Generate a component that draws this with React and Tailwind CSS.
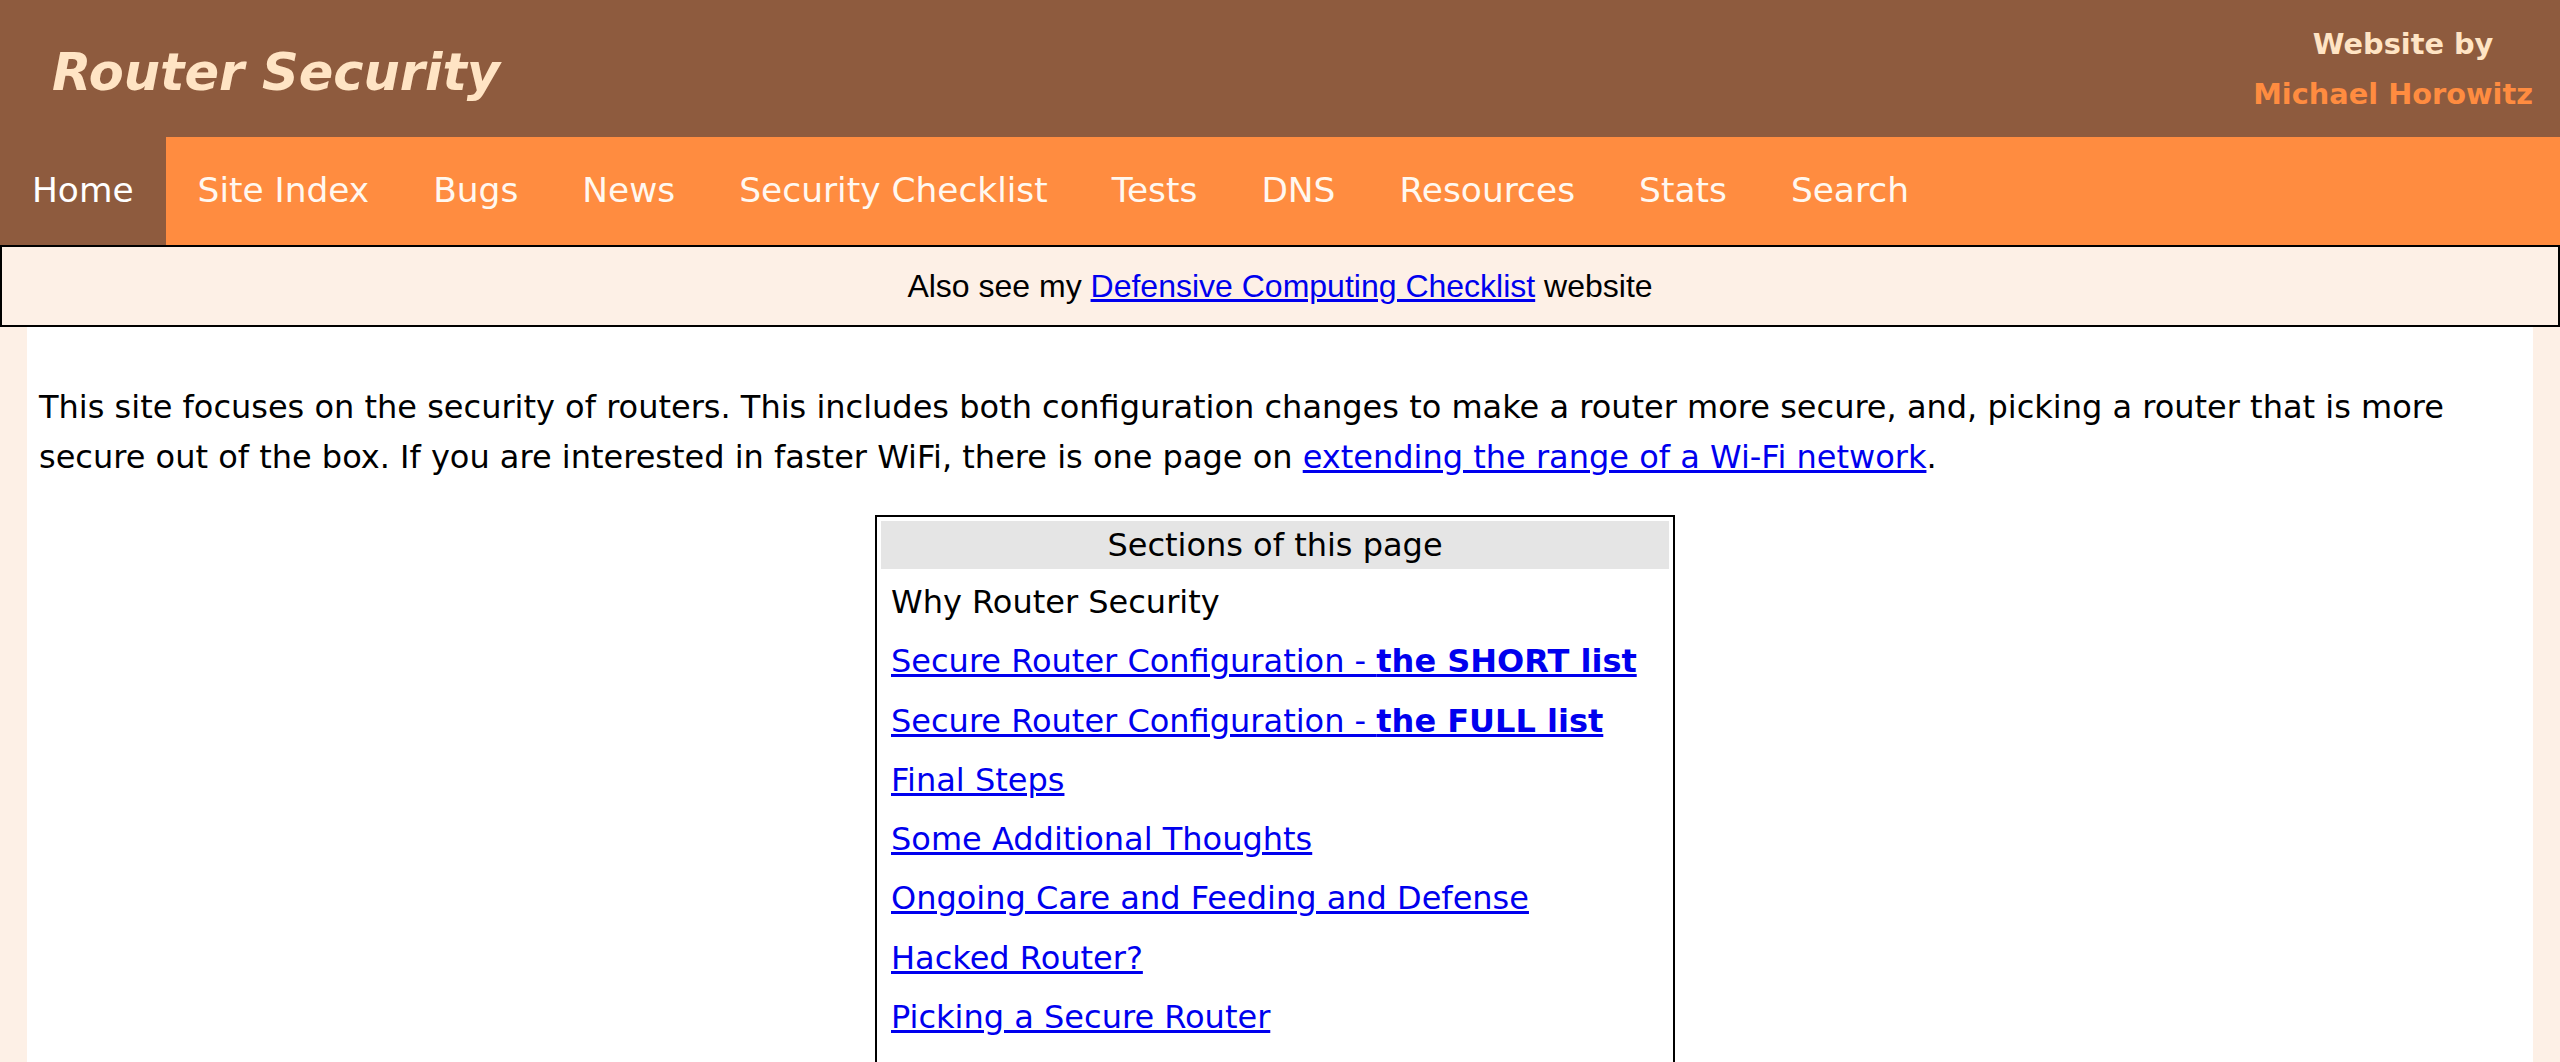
import React from "react";

const NAV = ["Site Index", "Bugs", "News", "Security Checklist", "Tests", "DNS", "Resources", "Stats", "Search"];

const SECTIONS = [
  { text: "Why Router Security" },
  { text: "Secure Router Configuration - ", bold: "the SHORT list", link: true },
  { text: "Secure Router Configuration - ", bold: "the FULL list", link: true },
  { text: "Final Steps", link: true },
  { text: "Some Additional Thoughts", link: true },
  { text: "Ongoing Care and Feeding and Defense", link: true },
  { text: "Hacked Router?", link: true },
  { text: "Picking a Secure Router", link: true },
];

export default function App() {
  return (
    <div className="min-h-screen bg-[#fdf0e6] text-black" style={{ fontFamily: "'DejaVu Sans', Verdana, sans-serif" }}>
      {/* top banner */}
      <header className="h-[137px] bg-[#8e5b3e] flex justify-between">
        <div className="pl-[52px] pt-[8px] flex items-center">
          <h1 className="text-[51px] font-bold italic text-[#ffe4c4] leading-none">Router Security</h1>
        </div>
        <div className="pr-[27px] pt-[19px] flex flex-col items-center font-bold text-[28.8px] leading-[50px]">
          <div className="text-[#ffe4c4] pl-[20px]">Website by</div>
          <div className="text-[#ff8c40]">Michael Horowitz</div>
        </div>
      </header>

      {/* menu */}
      <nav className="h-[108px] bg-[#ff8c40] flex items-stretch text-[34.4px] text-[#fff8f0]">
        <a className="px-[32px] bg-[#8e5b3e] flex items-center text-white">Home</a>
        {NAV.map((n) => (
          <a key={n} className="px-[32px] flex items-center">{n}</a>
        ))}
      </nav>

      <div className="h-[82px] border-2 border-black bg-[#fdf0e6] flex items-center justify-center text-[32px]" style={{ fontFamily: "'Liberation Sans', Arial, sans-serif" }}>
        <span>
          Also see my <a className="text-[#0000ee] underline">Defensive Computing Checklist</a> website
        </span>
      </div>

      <main className="mx-[27px] bg-white px-[12px] pt-[55px] pb-[40px]">
        <p className="text-[32px] leading-[50px]">
          This site focuses on the security of routers. This includes both configuration changes to make a router more secure, and, picking a router that is more secure out of the box. If you are interested in faster WiFi, there is one page on{" "}
          <a className="text-[#0000ee] underline">extending the range of a Wi-Fi network</a>.
        </p>

        <div className="flex justify-center pr-[10px]">
          <div className="mt-[33px] w-[800px] border-2 border-black p-[4px] pb-[60px] text-[32px]">
            <div className="h-[48px] leading-[48px] bg-[#e5e5e5] text-center">Sections of this page</div>
            <div className="px-[10px] pt-[4px]">
              {SECTIONS.map((s, i) => (
                <div key={i} className="leading-[59.3px] whitespace-nowrap">
                  {s.link ? (
                    <a className="text-[#0000ee] underline">
                      {s.text}
                      {s.bold && <b>{s.bold}</b>}
                    </a>
                  ) : (
                    s.text
                  )}
                </div>
              ))}
            </div>
          </div>
        </div>
      </main>
    </div>
  );
}
